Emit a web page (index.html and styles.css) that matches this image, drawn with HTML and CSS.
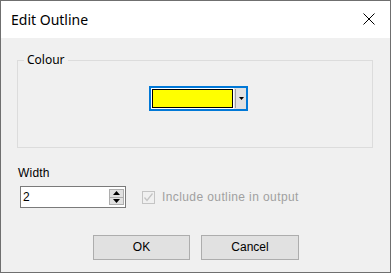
FILE: index.html
```html
<!DOCTYPE html>
<html>
<head>
	<title>Edit Outline</title>
	<link rel="stylesheet" href="styles.css">
</head>
<body>
	<div class="window">
		<div class="titlebar">
			<span class="title">Edit Outline</span>
			<svg class="close" width="12" height="12" viewBox="0 0 12 12">
				<path d="M0.5 0.5 L11.5 11.5 M11.5 0.5 L0.5 11.5" stroke="#000" stroke-width="1" fill="none"/>
			</svg>
		</div>

		<div class="content">
			<div class="group">
				<span class="group-label">Colour</span>
				<div class="combo">
					<div class="swatch"></div>
					<div class="drop">
						<svg width="5" height="3" viewBox="0 0 5 3"><path d="M0 0 H5 L2.5 3 Z" fill="#000"/></svg>
					</div>
				</div>
			</div>

			<div class="label">Width</div>
			<div class="row">
				<div class="spin">
					<span class="spin-value">2</span>
					<div class="spin-btns">
						<div class="spin-btn"><svg width="7" height="4" viewBox="0 0 7 4"><path d="M0 4 H7 L3.5 0 Z" fill="#000"/></svg></div>
						<div class="spin-btn"><svg width="7" height="4" viewBox="0 0 7 4"><path d="M0 0 H7 L3.5 4 Z" fill="#000"/></svg></div>
					</div>
				</div>
				<div class="check">
					<div class="check-box">
						<svg width="11" height="11" viewBox="0 0 11 11"><path d="M1.5 5.5 L4 8.5 L9.5 1.5" stroke="#c4c4c4" stroke-width="1.3" fill="none"/></svg>
					</div>
					<span class="check-text">Include outline in output</span>
				</div>
			</div>

			<div class="buttons">
				<div class="button">OK</div>
				<div class="button">Cancel</div>
			</div>
		</div>
	</div>
</body>
</html>
```

FILE: styles.css
```css
body { margin: 0; padding: 0; background: #f0f0f0; font-family: "Liberation Sans", Arial, sans-serif; font-size: 12px; color: #000; }

.window { width: 391px; height: 273px; box-sizing: border-box; border: 1px solid #6f6f6f; background: #f0f0f0; }

.titlebar { height: 37px; background: #fff; display: flex; align-items: center; padding: 0 15px 0 10px; }
.title { font-family: "Noto Sans", sans-serif; font-size: 14px; flex: 1; margin-top: -1px; }
.close { display: block; margin-top: -1px; }

.content { padding: 22px 17px 0 16px; }

.group { height: 86px; border: 1px solid #dcdcdc; }
.group-label { display: inline-block; margin: -9px 0 0 6px; padding: 0 3px; background: #f0f0f0; font-family: "Noto Sans", sans-serif; font-size: 12px; line-height: 16px; vertical-align: top; }

.combo { width: 95px; height: 21px; margin: 11px 0 0 131px; border: 2px solid #0078d7; display: flex; background: #e1e1e1; }
.swatch { width: 81px; height: 19px; margin: 1px 0 0 1px; box-sizing: border-box; border: 1px solid #000; background: #ffff00; outline: 1px solid #fff; }
.drop { width: 10px; margin: 1px 0 0 2px; border-left: 1px solid #a0a0a0; display: flex; align-items: center; justify-content: center; height: 19px; }
.drop svg { display: block; margin-left: 1px; }

.label { margin: 18px 0 0 1px; line-height: 15px; letter-spacing: 0.2px; }

.row { display: flex; align-items: center; margin-top: 5px; }
.spin { width: 104px; height: 20px; border: 1px solid #7a7a7a; background: #fff; display: flex; margin-left: 3px; }
.spin-value { flex: 1; padding-left: 2px; line-height: 20px; font-size: 12px; }
.spin-btns { width: 15px; display: flex; flex-direction: column; padding: 2px 1px 2px 0; }
.spin-btn { flex: 1; box-sizing: border-box; border: 1px solid #adadad; background: #e1e1e1; display: flex; align-items: center; justify-content: center; }
.spin-btn + .spin-btn { border-top: none; }
.spin-btn svg { display: block; }

.check { display: flex; align-items: center; margin-left: 16px; }
.check-box { width: 11px; height: 11px; border: 1px solid #c4c4c4; background: #f0f0f0; }
.check-box svg { display: block; }
.check-text { margin-left: 7px; color: #a0a0a0; font-size: 12px; letter-spacing: 0.4px; }

.buttons { display: flex; gap: 11px; margin: 27px 0 0 76px; }
.button { width: 95px; height: 23px; border: 1px solid #adadad; background: #e1e1e1; text-align: center; line-height: 23px; font-size: 12px; }
.button + .button { width: 96px; }
```
